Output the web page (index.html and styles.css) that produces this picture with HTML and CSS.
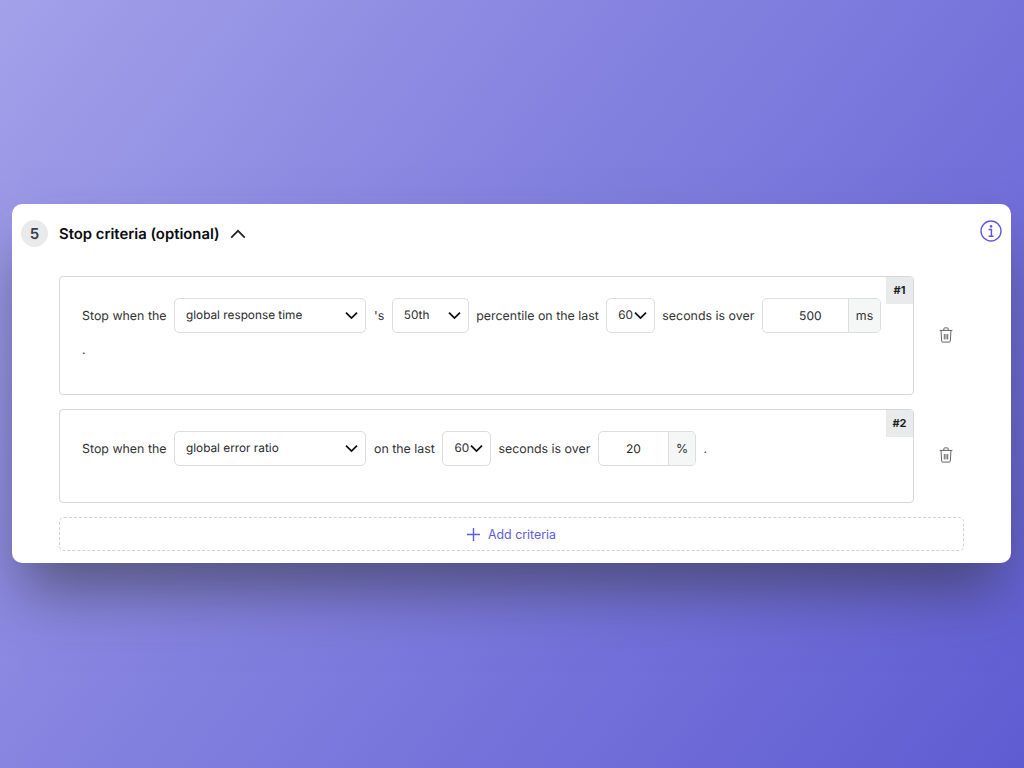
FILE: index.html
```html
<!DOCTYPE html>
<html lang="en">
<head>
<meta charset="utf-8">
<title>Stop criteria</title>
<link rel="stylesheet" href="styles.css">
</head>
<body>
<section class="panel">
  <header class="head">
    <span class="step">5</span>
    <h2 class="title">Stop criteria (optional)</h2>
    <svg class="caret-up" width="16" height="10" viewBox="0 0 16 10"><path d="M1.2 8.6 8 1.8l6.8 6.8" fill="none" stroke="#222" stroke-width="1.7"/></svg>
    <svg class="info" width="22" height="22" viewBox="0 0 22 22" fill="none" stroke="#5f5bdc"><circle cx="11" cy="11" r="10" stroke-width="1.4"/><circle cx="11" cy="6.4" r="1.3" fill="#5f5bdc" stroke="none"/><path d="M8.6 9.6H11.4V16M8.6 16.2H13.6" stroke-width="1.5"/></svg>
  </header>

  <div class="item item-1">
    <div class="crit crit-1">
      <span class="tag">#1</span>
      <div class="line">
        <span>Stop when the</span>
        <span class="sel sel-wide">global response time<svg class="chev" width="13" height="9" viewBox="0 0 13 9"><path d="M1 1.6 6.5 7.1 12 1.6" fill="none" stroke="#111" stroke-width="1.8"/></svg></span>
        <span>'s</span>
        <span class="sel sel-mid">50th<svg class="chev" width="13" height="9" viewBox="0 0 13 9"><path d="M1 1.6 6.5 7.1 12 1.6" fill="none" stroke="#111" stroke-width="1.8"/></svg></span>
        <span>percentile on the last</span>
        <span class="sel sel-small">60<svg class="chev" width="13" height="9" viewBox="0 0 13 9"><path d="M1 1.6 6.5 7.1 12 1.6" fill="none" stroke="#111" stroke-width="1.8"/></svg></span>
        <span>seconds is over</span>
        <span class="num"><span class="val val-500">500</span><span class="unit">ms</span></span>
        <span class="dot-line">.</span>
      </div>
    </div>
    <button class="trash" type="button" aria-label="Delete">
      <svg width="14" height="16" viewBox="0 0 14 16" fill="none" stroke="#555" stroke-width="0.9"><path d="M.6 3.4H13.4M2 3.4l.7 10.8a1 1 0 0 0 1 .9h6.6a1 1 0 0 0 1-.9l.7-10.8M4.8 3.2V1.8a.9.9 0 0 1 .9-.9h2.6a.9.9 0 0 1 .9.9v1.4M5.3 7v5.4M7 7v5.4M8.7 7v5.4"/></svg>
    </button>
  </div>

  <div class="item item-2">
    <div class="crit crit-2">
      <span class="tag">#2</span>
      <div class="line">
        <span>Stop when the</span>
        <span class="sel sel-wide">global error ratio<svg class="chev" width="13" height="9" viewBox="0 0 13 9"><path d="M1 1.6 6.5 7.1 12 1.6" fill="none" stroke="#111" stroke-width="1.8"/></svg></span>
        <span>on the last</span>
        <span class="sel sel-small">60<svg class="chev" width="13" height="9" viewBox="0 0 13 9"><path d="M1 1.6 6.5 7.1 12 1.6" fill="none" stroke="#111" stroke-width="1.8"/></svg></span>
        <span>seconds is over</span>
        <span class="num"><span class="val val-20">20</span><span class="unit">%</span></span>
        <span>.</span>
      </div>
    </div>
    <button class="trash" type="button" aria-label="Delete">
      <svg width="14" height="16" viewBox="0 0 14 16" fill="none" stroke="#555" stroke-width="0.9"><path d="M.6 3.4H13.4M2 3.4l.7 10.8a1 1 0 0 0 1 .9h6.6a1 1 0 0 0 1-.9l.7-10.8M4.8 3.2V1.8a.9.9 0 0 1 .9-.9h2.6a.9.9 0 0 1 .9.9v1.4M5.3 7v5.4M7 7v5.4M8.7 7v5.4"/></svg>
    </button>
  </div>

  <button class="add" type="button">
    <svg width="13" height="13" viewBox="0 0 13 13"><path d="M6.5 0v13M0 6.5h13" stroke="#5f5bdc" stroke-width="1.4" fill="none"/></svg>
    Add criteria
  </button>
</section>
</body>
</html>
```
FILE: styles.css
```css
* { box-sizing: border-box; }
html, body { height: 100%; }
body {
  margin: 0;
  height: 768px;
  overflow: hidden;
  padding: 204px 13px 0 12px;
  background: linear-gradient(128deg, #a3a1e9 0%, #8886e0 35%, #7573da 65%, #5f5cd2 100%);
  font-family: Inter, "Liberation Sans", sans-serif;
  font-size: 12.4px;
  color: #333;
  text-rendering: geometricPrecision;
}
.panel {
  height: 359px;
  background: #fff;
  border-radius: 10px;
  padding: 16px 9px 12px 9px;
  box-shadow: 0 36px 56px -10px rgba(50, 50, 60, 0.6);
}
.head {
  display: flex;
  align-items: center;
  height: 27px;
  margin-bottom: 29px;
}
.step {
  width: 27px;
  height: 27px;
  border-radius: 50%;
  background: #e9eaec;
  display: flex;
  align-items: center;
  justify-content: center;
  font-size: 15px;
  font-weight: 600;
  color: #3c3f46;
}
.title {
  margin: 0 0 0 11px;
  font-size: 14.85px;
  font-weight: 600;
  color: #0b0b10;
}
.caret-up { margin-left: 10px; }
.info { margin-left: auto; margin-top: -6px; }
.item {
  display: flex;
  margin: 0 0 14px 38px;
}
.crit {
  position: relative;
  width: 855px;
  border: 1px solid #d6d7db;
  border-radius: 4px;
  padding: 21px 20px 0 22px;
}
.crit-1 { height: 119px; }
.crit-2 { height: 94px; }
.tag {
  position: absolute;
  top: 0;
  right: 0;
  width: 27px;
  height: 27px;
  padding-bottom: 1px;
  background: #e9eaec;
  display: flex;
  align-items: center;
  justify-content: center;
  font-size: 11px;
  font-weight: 700;
  color: #1e1f24;
}
.line {
  display: flex;
  flex-wrap: wrap;
  align-items: center;
  column-gap: 7.5px;
  line-height: 17px;
}
.dot-line { width: 100%; line-height: 33px; }
.sel {
  height: 35px;
  display: flex;
  align-items: center;
  justify-content: space-between;
  border: 1px solid #dcdde1;
  border-radius: 5px;
  padding: 0 7px 0 11px;
  font-size: 11.8px;
  color: #2a2b30;
  background: #fff;
}
.sel-wide { width: 192.5px; }
.sel-mid { width: 77px; }
.sel-small { width: 48.5px; }
.num {
  height: 35px;
  display: flex;
  border: 1px solid #dcdde1;
  border-radius: 5px;
  overflow: hidden;
}
.val {
  display: flex;
  align-items: center;
  justify-content: center;
  font-size: 12px;
  color: #2a2b30;
}
.val-500 { width: 85px; padding-left: 10px; }
.val-20 { width: 69px; }
.unit {
  display: flex;
  align-items: center;
  justify-content: center;
  padding: 0 7px;
  background: #f5f6f6;
  border-left: 1px solid #dcdde1;
}
.trash {
  background: none;
  border: 0;
  padding: 0;
  margin: 51px 0 0 25px;
  height: 18px;
}
.item-2 .trash { margin-top: 38px; }
.add {
  display: flex;
  align-items: center;
  justify-content: center;
  gap: 8px;
  width: 905px;
  height: 34px;
  margin-left: 38px;
  background: #fff;
  border: 1px dashed #d0d1d6;
  border-radius: 5px;
  font: inherit;
  color: #5f5bdc;
}
```
